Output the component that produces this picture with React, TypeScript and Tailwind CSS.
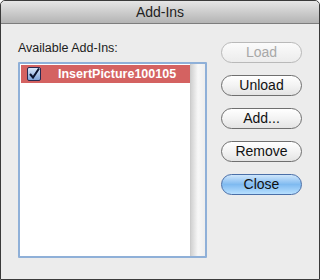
export default function App() {
  const buttons = [
    { label: "Load", disabled: true },
    { label: "Unload" },
    { label: "Add..." },
    { label: "Remove" },
    { label: "Close", primary: true },
  ];

  return (
    <div
      className="w-[320px] h-[280px] overflow-hidden bg-[#ececec] border border-[#3a3a3a] rounded-t-[5px] flex flex-col"
      style={{ fontFamily: '"Liberation Sans", Arial, sans-serif' }}
    >
      {/* title bar */}
      <div className="h-[23px] shrink-0 flex items-center justify-center bg-gradient-to-b from-[#e6e6e6] to-[#b4b4b4] border-b border-[#7d7d7d] rounded-t-[4px]">
        <span className="text-[14px] text-[#222]">Add-Ins</span>
      </div>

      <div className="flex-1 flex pl-[17px] pt-[16px]">
        {/* list column */}
        <div className="flex flex-col">
          <div className="text-[12.5px] leading-[16px] text-[#1d1d1d] h-[22px]">Available Add-Ins:</div>
          <div className="w-[189px] h-[196px] border-2 border-[#8fb0d8] rounded-[1px] bg-white flex">
            <div className="flex-1 pt-[1px] pl-[1px]">
              <div className="h-[18px] bg-[#d46261] flex items-center">
                <div className="ml-[6px] w-[14px] h-[14px] rounded-[2px] border border-[#2a2a50] bg-gradient-to-b from-[#d8e6f8] to-[#7fa3d8] flex items-center justify-center">
                  <svg width="12" height="12" viewBox="0 0 12 12">
                    <path d="M2 6 L5 9.5 L11 0.5" fill="none" stroke="#0c1430" strokeWidth="2" />
                  </svg>
                </div>
                <span className="ml-[17px] text-[12.5px] font-bold text-white">InsertPicture100105</span>
              </div>
            </div>
            <div className="w-[15px] bg-gradient-to-r from-[#d2d2d2] via-[#f7f7f7] to-[#eeeeee] border-l border-[#cccccc]" />
          </div>
        </div>

        {/* buttons */}
        <div className="ml-[14px] mt-[2px] flex flex-col gap-[12px]">
          {buttons.map((b) => (
            <div
              key={b.label}
              className={
                b.primary
                  ? "w-[81px] h-[21px] rounded-full border border-[#4a6fa8] bg-gradient-to-b from-[#cfe6fb] via-[#7fbaf0] to-[#b8e0ff] flex items-center justify-center text-[14px] text-[#111]"
                  : b.disabled
                  ? "w-[81px] h-[21px] rounded-full border border-[#b9b9b9] bg-gradient-to-b from-[#fbfbfb] to-[#ececec] flex items-center justify-center text-[14px] text-[#a8a8a8]"
                  : "w-[81px] h-[21px] rounded-full border border-[#6f6f6f] bg-gradient-to-b from-white via-[#f3f3f3] to-[#e4e4e4] flex items-center justify-center text-[14px] text-[#111]"
              }
            >
              {b.label}
            </div>
          ))}
        </div>
      </div>
    </div>
  );
}
